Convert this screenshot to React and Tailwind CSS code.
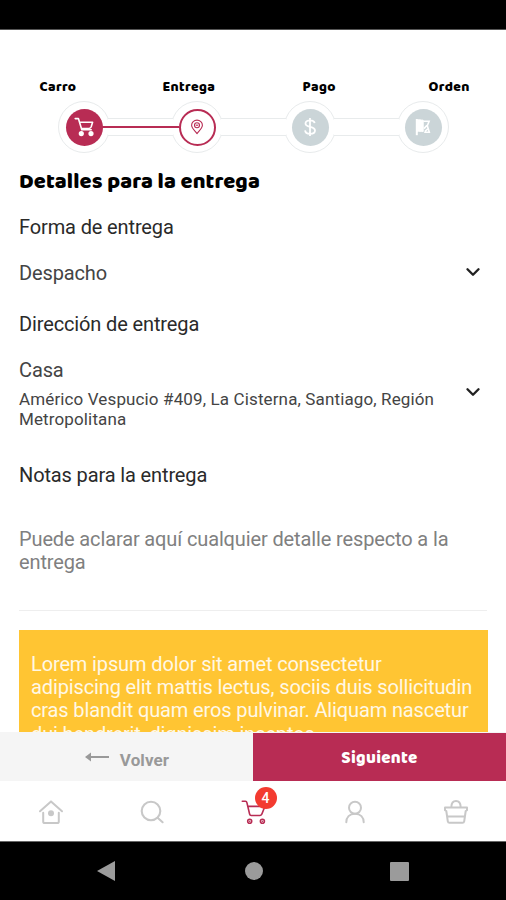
import { ChevronDown } from 'lucide-react'

const STEPS = [
  { label: 'Carro', labelClass: 'ml-[39px] w-[123px]', state: 'done', icon: CartSolidIcon },
  { label: 'Entrega', labelClass: 'w-[140px]', state: 'current', icon: PinIcon },
  { label: 'Pago', labelClass: 'w-[126px]', state: 'pending', icon: DollarIcon },
  { label: 'Orden', labelClass: '', state: 'pending', icon: FlagIcon },
]

const STEP_STYLES = {
  done: 'bg-[#b82c54] text-white',
  current: 'bg-white border-2 border-[#b82c54] text-[#b82c54]',
  pending: 'bg-[#cbd5d8] text-white',
}

function CartSolidIcon() {
  return (
    <svg width="22" height="22" viewBox="0 0 22 22" fill="none" stroke="currentColor" strokeWidth="1.6" strokeLinecap="round" strokeLinejoin="round">
      <path d="M2.2 2.6h3.2l3.4 11.2h9.4M6.4 6.2h13.2l-1.4 4.6c-.3.9-.8 1.3-1.7 1.4l-8 .4" />
      <circle cx="8.3" cy="17.6" r="1.8" fill="currentColor" />
      <circle cx="18" cy="17.6" r="1.8" fill="currentColor" />
    </svg>
  )
}

function PinIcon() {
  return (
    <svg width="14" height="16" viewBox="0 0 14 16" fill="none" stroke="currentColor" strokeWidth="1.1" strokeLinejoin="round">
      <path d="M7 14.6C4.6 11.6 1.6 9.2 1.6 6.3a5.4 5.2 0 0 1 10.8 0c0 2.9-3 5.3-5.4 8.3Z" />
      <circle cx="7" cy="6.2" r="2.5" />
      <path d="M5.8 6.2h2.4" />
    </svg>
  )
}

function DollarIcon() {
  return (
    <svg width="14" height="20" viewBox="0 0 14 20" fill="none" stroke="currentColor" strokeWidth="1.8">
      <path d="M7 1v18M11.6 6.2C11.4 4.4 9.6 3.3 7.1 3.3c-2.8 0-4.6 1.3-4.6 3.2 0 4.6 9.5 2.2 9.5 7 0 2-2 3.3-4.8 3.3-3 0-5-1.4-5.1-3.4" />
    </svg>
  )
}

function FlagIcon() {
  return (
    <svg width="16" height="18" viewBox="0 0 16 18" fill="none" stroke="currentColor">
      <path d="M1.8 1V17.2" strokeWidth="2" />
      <path d="M2 2c2-.8 3.8.2 6.2.2v11.4c-2.2 0-4.2-.8-6.2.2Z" fill="currentColor" strokeWidth="1" />
      <path d="M8.3 3.2h5.8l-1.8 4.6 2 6.4H9.2M9 10.6l3-3.4M10 13.4l2.6-2.4" strokeWidth="1.6" />
    </svg>
  )
}

function HomeIcon() {
  return (
    <svg width="26" height="26" viewBox="0 0 26 26" fill="none" stroke="currentColor" strokeWidth="2" strokeLinecap="round" strokeLinejoin="round">
      <path d="M2 12.3 13 2.4l11 9.9M5.2 13.8v8.6a1.7 1.7 0 0 0 1.7 1.7h12.2a1.7 1.7 0 0 0 1.7-1.7v-8.6" />
      <circle cx="13" cy="14.2" r="3" fill="currentColor" stroke="none" />
    </svg>
  )
}

function SearchIcon() {
  return (
    <svg width="26" height="26" viewBox="0 0 26 26" fill="none" stroke="currentColor" strokeWidth="2.1" strokeLinecap="round">
      <circle cx="12" cy="12" r="9.3" />
      <path d="m18.6 18.8 5 4.4" />
    </svg>
  )
}

function CartIcon() {
  return (
    <svg width="26" height="26" viewBox="0 0 26 26" fill="none" stroke="currentColor" strokeWidth="1.6" strokeLinecap="round" strokeLinejoin="round">
      <path d="M1.3 2.3h3.2c.9 0 1.2.5 1.4 1.3L8.6 15c.2 1 .7 1.5 1.6 1.5h8.8c.9 0 1.4-.5 1.8-1.3l3.1-7.8H6.8" />
      <circle cx="8.7" cy="22.2" r="2" />
      <circle cx="21.4" cy="22.2" r="2" />
      <path d="M8.7 22.2h.01M21.4 22.2h.01" />
    </svg>
  )
}

function UserIcon() {
  return (
    <svg width="26" height="26" viewBox="0 0 26 26" fill="none" stroke="currentColor" strokeWidth="2" strokeLinecap="round">
      <circle cx="13" cy="8.8" r="6" />
      <path d="M4.3 23.3c0-5 3.2-8.6 8.7-8.6s8.7 3.6 8.7 8.6" />
    </svg>
  )
}

function BasketIcon() {
  return (
    <svg width="26" height="26" viewBox="0 0 26 26" fill="none" stroke="currentColor" strokeWidth="2" strokeLinejoin="round">
      <path d="M2 8.6h22v2.6l-1.3.8-1.5 10.3a1.8 1.8 0 0 1-1.8 1.5H6.6a1.8 1.8 0 0 1-1.8-1.5L3.3 12 2 11.2ZM8.3 8.2C8.4 4.4 10 2 13 2s4.6 2.4 4.7 6.2M4 17.4h18" />
    </svg>
  )
}

function Stepper() {
  return (
    <div>
      <div className="flex pt-[47px] pl-[0.5px] font-['Baloo','Baloo_2','Open_Sans',sans-serif] text-[14px] leading-[20px] font-extrabold tracking-[0.4px] text-black">
        {STEPS.map((step) => (
          <span key={step.label} className={step.labelClass}>{step.label}</span>
        ))}
      </div>
      <div className="mt-[4px] flex items-center pl-[58px]">
        {STEPS.map((step, i) => (
          <div key={step.label} className="flex items-center">
            {i > 0 && (
              <div className="relative z-10 -mx-[2px] flex h-[18px] w-[65px] items-center border-y border-[#e8ebec] bg-white">
                {i === 1 && <div className="-mx-[6px] h-[2px] w-[77px] shrink-0 bg-[#b82c54]" />}
              </div>
            )}
            <div className="flex size-[52px] items-center justify-center rounded-full border border-[#e8ebec] bg-white">
              <div className={`flex size-[37px] items-center justify-center rounded-full ${STEP_STYLES[step.state]}`}>
                <step.icon />
              </div>
            </div>
          </div>
        ))}
      </div>
    </div>
  )
}

function TabBar() {
  return (
    <nav className="flex h-[60px] items-center justify-between bg-white pt-[2px] pr-[37px] pl-[38px] text-[#c8c8c8]">
      <HomeIcon />
      <SearchIcon />
      <div className="relative text-[#b82c54]">
        <CartIcon />
        <span className="absolute -top-[12px] left-[14px] flex size-[22px] items-center justify-center rounded-full bg-[#f33b30] text-[14px] leading-none font-medium text-white">
          4
        </span>
      </div>
      <UserIcon />
      <BasketIcon />
    </nav>
  )
}

export default function App() {
  return (
    <div className="flex h-[900px] w-[506px] flex-col overflow-hidden bg-white font-[Roboto,sans-serif] text-[20px] leading-[23px] tracking-[-0.13px] text-[#444]">
      <div className="h-[30px] shrink-0 border-b border-[#555] bg-black" />

      <main className="min-h-0 flex-1 overflow-hidden">
        <Stepper />
        <div className="px-[19px]">
          <h1 className="mt-[15px] font-['Baloo','Baloo_2','Open_Sans',sans-serif] text-[22px] leading-[28px] font-extrabold tracking-[0.1px] text-black">
            Detalles para la entrega
          </h1>

          <h2 className="mt-5 text-[#2a2a2a]">Forma de entrega</h2>
          <div className="mt-[23px] flex items-center justify-between pr-[3px]">
            <span>Despacho</span>
            <ChevronDown size={22} strokeWidth={2.6} className="-mt-[4px] text-[#222]" />
          </div>

          <h2 className="mt-[28px] text-[#2a2a2a]">Dirección de entrega</h2>
          <div className="mt-[23px] flex items-center justify-between pr-[3px]">
            <div>
              <div>Casa</div>
              <div className="mt-[7px] w-[430px] text-[17px] leading-[20px] tracking-[0.13px]">
                Américo Vespucio #409, La Cisterna, Santiago, Región Metropolitana
              </div>
            </div>
            <ChevronDown size={22} strokeWidth={2.6} className="-mt-[4px] shrink-0 text-[#222]" />
          </div>

          <h2 className="mt-[35px] text-[#2a2a2a]">Notas para la entrega</h2>
          <p className="mt-[41px] text-[#808080]">
            Puede aclarar aquí cualquier detalle respecto a la entrega
          </p>
          <div className="mt-[36px] border-t border-[#eee]" />

          <div className="mt-[19px] w-[469px] bg-[#ffc533] pt-[23px] pr-[8px] pb-6 pl-[12px] leading-[23.2px] text-[#fff8e5]">
            Lorem ipsum dolor sit amet consectetur
            <br />
            adipiscing elit mattis lectus, sociis duis sollicitudin
            <br />
            cras blandit quam eros pulvinar. Aliquam nascetur
            <br />
            dui hendrerit, dignissim inceptos
          </div>
        </div>
      </main>

      <div className="flex h-[49px] shrink-0 bg-[#f5f5f5]">
        <button className="flex flex-1 items-center justify-center gap-[10px] pt-[7px] text-[17px] font-bold tracking-[0.1px] text-[#999]">
          <svg width="26" height="12" viewBox="0 0 26 12" fill="none" stroke="currentColor" strokeWidth="2" className="-mt-[6px]">
            <path d="M3 6h22" />
            <path d="M1 6l6-4.5v9Z" fill="currentColor" stroke="none" />
          </svg>
          Volver
        </button>
        <button className="mt-px flex-1 bg-[#b82c54] pt-[3px] font-['Baloo','Baloo_2','Open_Sans',sans-serif] text-[17px] font-extrabold tracking-[0.3px] text-white">
          Siguiente
        </button>
      </div>

      <TabBar />

      <div className="flex h-[59px] shrink-0 items-center justify-between border-t border-[#666] bg-black px-[97px] text-[#9b9b9b]">
        <svg width="18" height="20" viewBox="0 0 18 20" fill="currentColor">
          <path d="M0 10 18 0v20Z" />
        </svg>
        <div className="ml-[2px] size-[18px] rounded-full bg-current" />
        <div className="size-[19px] rounded-[1px] bg-current" />
      </div>
    </div>
  )
}
